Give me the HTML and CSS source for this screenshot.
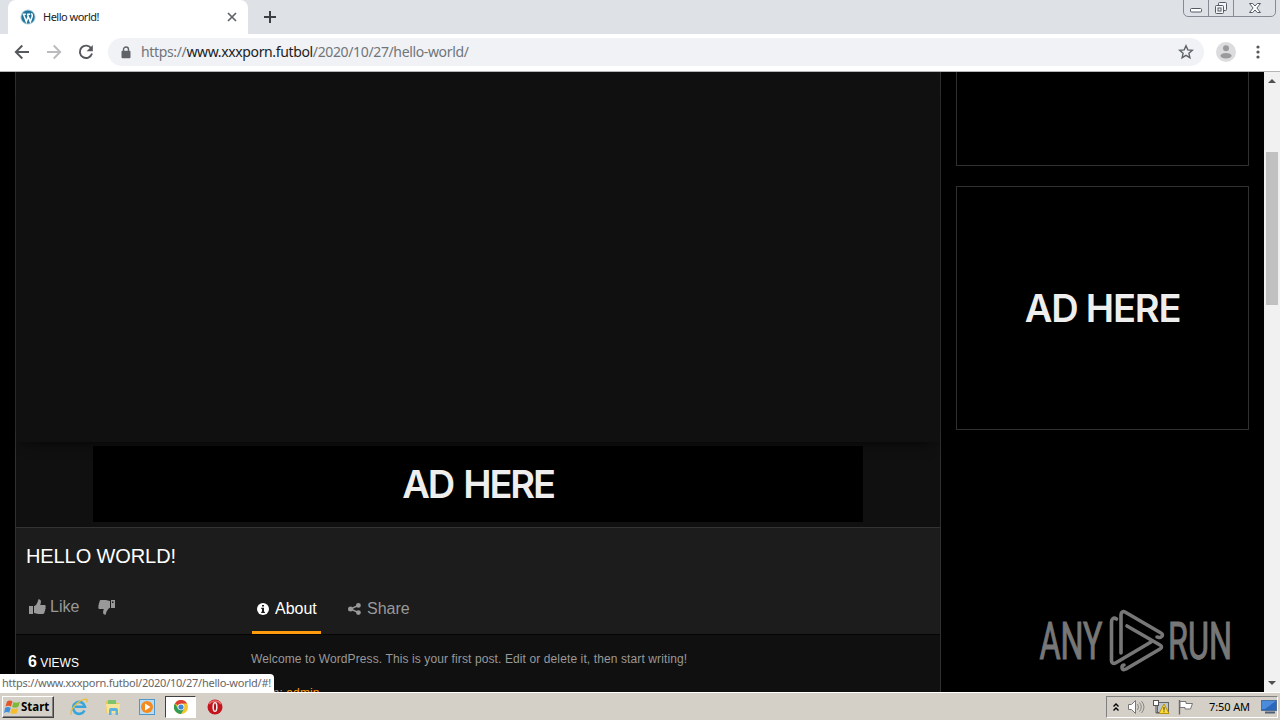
FILE: index.html
```html
<!DOCTYPE html>
<html lang="en">
<head>
    <meta charset="UTF-8">
    <meta name="viewport" content="width=device-width, initial-scale=1.0">
    <title>Hello world!</title>
    <link rel="stylesheet" href="styles.css">
</head>
<body>

    <!-- Browser tabs -->
    <div class="tab-strip">
        <div class="tab">
            <svg class="favicon" width="16" height="16" viewBox="0 0 16 16">
                <circle cx="8" cy="8" r="7.6" fill="#a9cde0"/>
                <circle cx="8" cy="8" r="6.6" fill="#21759b"/>
                <path d="M2.6 5.2h3.2M7 5.2h3.2M3.5 5.2l2.8 7.6 2-5.6M7.4 5.2l2.9 7.6 1.9-5.4c.5-1.500-.6-2-.6-3.200" fill="none" stroke="#fff" stroke-width="1.5"/>
            </svg>
            <span class="tab-title">Hello world!</span>
            <svg class="tab-close" width="10" height="10" viewBox="0 0 10 10"><path d="M1 1l8 8M9 1L1 9" stroke="#5f6368" stroke-width="1.7"/></svg>
        </div>
        <svg class="new-tab" width="12" height="12" viewBox="0 0 12 12"><path d="M6 0v12M0 6h12" stroke="#3c4043" stroke-width="2"/></svg>
        <div class="window-buttons">
            <span class="win-min"><svg width="14" height="16" viewBox="0 0 14 16"><rect x="1.500" y="8.500" width="11" height="3.500" rx="1" fill="#fff" stroke="#555b66"/></svg></span>
            <span class="win-max"><svg width="14" height="16" viewBox="0 0 14 16"><g fill="#f4f5f7" stroke="#555b66"><rect x="4.500" y="2.500" width="8" height="8" rx="1"/><rect x="1.500" y="5.500" width="8" height="8" rx="1"/><rect x="4" y="8" width="3" height="3"/></g></svg></span>
            <span class="win-close"><svg width="14" height="16" viewBox="0 0 14 16"><path d="M1.500 3.500h3.200L7 6l2.300-2.500h3.200L8.900 8l3.600 4.500H9.300L7 10l-2.300 2.500H1.500L5.100 8z" fill="#fff" stroke="#555b66"/></svg></span>
        </div>
    </div>

    <!-- Address bar -->
    <div class="toolbar">
        <svg class="nav-back" width="16" height="16" viewBox="0 0 16 16"><path d="M15 8H2M8.300 1.500L1.800 8l6.500 6.500" fill="none" stroke="#55585c" stroke-width="1.900"/></svg>
        <svg class="nav-forward" width="16" height="16" viewBox="0 0 16 16"><path d="M1 8h13M7.700 1.500L14.200 8l-6.500 6.500" fill="none" stroke="#b9bbbe" stroke-width="1.900"/></svg>
        <svg class="nav-reload" width="16" height="16" viewBox="0 0 16 16"><path d="M13.300 4.500A6.200 6.200 0 1 0 14 9.500" fill="none" stroke="#55585c" stroke-width="1.900"/><path d="M14.800 1v6.200H8.600z" fill="#55585c"/></svg>
        <div class="address">
            <svg class="lock" width="10" height="13" viewBox="0 0 10 13"><path d="M2.500 5.500V3.500a2.500 2.500 0 0 1 5 0v2" fill="none" stroke="#5f6368" stroke-width="1.400"/><rect x="0.500" y="4.700" width="9" height="7.600" rx="1" fill="#5f6368"/></svg>
            <span class="url">https://<b>www.xxxporn.futbol</b>/2020/10/27/hello-world/</span>
            <svg class="star" width="16" height="16" viewBox="0 0 16 16"><path d="M8 1.800l1.800 4.100 4.500.4-3.400 3 1 4.400L8 11.400l-3.900 2.300 1-4.400-3.400-3 4.500-.4z" fill="none" stroke="#5f6368" stroke-width="1.400"/></svg>
        </div>
        <svg class="profile" width="20" height="20" viewBox="0 0 20 20"><circle cx="10" cy="10" r="10" fill="#dcdcde"/><circle cx="10" cy="6.300" r="3" fill="#9a9a9d"/><ellipse cx="10" cy="13.700" rx="5.600" ry="2.800" fill="#9a9a9d"/></svg>
        <svg class="dots" width="4" height="14" viewBox="0 0 4 14"><g fill="#55585c"><circle cx="2" cy="2" r="1.600"/><circle cx="2" cy="7" r="1.600"/><circle cx="2" cy="12" r="1.600"/></g></svg>
    </div>

    <!-- Web page -->
    <div class="viewport">
        <div class="video-column">
            <div class="player"></div>
            <div class="banner-row">
                <div class="banner">AD HERE</div>
            </div>
            <div class="video-info">
                <h1>HELLO WORLD!</h1>
                <div class="actions">
                    <div class="rating">
                        <svg width="17" height="16" viewBox="0 0 17 16" fill="#999"><path d="M0 7h4v8H0zM5 7.300c1.800-.8 3.200-2.800 3.700-4.600L9.400.3c2.600-.3 3.200 2 1.800 5.700h4.200c1.400 0 1.700 1.500.9 2.300.7.700.5 1.900-.3 2.300.4.900.1 1.700-.6 2.100.3 1.300-.3 2.300-1.700 2.300H9.500c-2 0-3-.8-4.500-1z"/></svg>
                        <span>Like</span>
                        <svg class="dislike" width="17" height="16" viewBox="0 0 17 16" fill="#999"><path d="M17 1h-4v8h4zM12 8.700c-1.800.8-3 2.800-3.700 4.600L7.600 15.700c-2.600.3-3.200-2-1.800-5.700H1.600C.2 10-.1 8.500.7 7.700 0 7 .2 5.800 1 5.400c-.4-.9-.1-1.700.6-2.100C1.300 2 1.900 1 3.300 1h4.200c2 0 3 .8 4.500 1z"/><path d="M14 2.500h1.500v1.500H14z" fill="#1c1c1c"/></svg>
                    </div>
                    <div class="info-tab active">
                        <svg width="12" height="12" viewBox="0 0 12 12"><circle cx="6" cy="6" r="6" fill="#fff"/><path d="M5 2h2v1.600H5zM4.200 4.700H7v4h.9V10H4.200V8.700H5V6h-.8z" fill="#1c1c1c"/></svg>
                        <span>About</span>
                    </div>
                    <div class="info-tab">
                        <svg width="13" height="12" viewBox="0 0 13 12"><path d="M10.300 2.400L2.700 6l7.600 3.600" fill="none" stroke="#999" stroke-width="1.600"/><g fill="#999"><circle cx="10.400" cy="2.400" r="2.400"/><circle cx="2.500" cy="6" r="2.500"/><circle cx="10.400" cy="9.600" r="2.400"/></g></svg>
                        <span>Share</span>
                    </div>
                </div>
            </div>
            <div class="details">
                <div class="views"><b>6</b> VIEWS</div>
                <div class="description">
                    <p>Welcome to WordPress. This is your first post. Edit or delete it, then start writing!</p>
                    <p class="author">From: <a>admin</a></p>
                </div>
            </div>
        </div>
        <div class="sidebar">
            <div class="side-ad side-ad-top"></div>
            <div class="side-ad">AD HERE</div>
        </div>
        <div class="scrollbar">
            <svg width="16" height="17" viewBox="0 0 16 17"><path d="M4 11l4-4 4 4z" fill="#505050"/></svg>
            <div class="thumb"></div>
            <svg width="16" height="17" viewBox="0 0 16 17"><path d="M4 6l4 4 4-4z" fill="#505050"/></svg>
        </div>
        <svg class="watermark" width="200" height="66" viewBox="0 0 200 66">
            <g fill="#777" stroke="#777" stroke-width="1.100" font-family="Roboto, sans-serif" font-size="51">
                <text x="4.500" y="51" textLength="63" lengthAdjust="spacingAndGlyphs">ANY</text>
                <text x="133" y="51" textLength="64" lengthAdjust="spacingAndGlyphs">RUN</text>
            </g>
            <g fill="none" stroke="#777" stroke-width="3.600" stroke-linejoin="round" stroke-linecap="round">
                <path d="M81.500 11c-3-2-5 0-5 3v39c0 2 2 3 4 2L116 34"/>
                <path d="M86 45V7c0-3 2-4 4-3l36 21c2 1 2 3 0 4-1 1-3 0-4 0"/>
                <path d="M92 18l33 19c2 1 2 3 0 4L91 61c-2 1-4 1-4-2 0-1 1-2 2-2"/>
            </g>
        </svg>
        <div class="status">https://www.xxxporn.futbol/2020/10/27/hello-world/#!</div>
    </div>

    <!-- Taskbar -->
    <div class="taskbar">
        <div class="start">
            <svg width="17" height="16" viewBox="0 0 17 16"><path d="M3 2.500c2-1.500 4-1 5.500 0L7 7.500c-1.500-1-3.500-1.200-5.500 0z" fill="#e2562a"/><path d="M9.500 3c2 1 4 1 6.500-.5l-1.500 5C12.500 9 10 9 8 8z" fill="#7fb93c"/><path d="M1.200 8.700c2-1.200 4-.9 5.500 0l-1.500 5c-1.500-1-3.500-1-5.200.2z" fill="#3f8fdd"/><path d="M7.600 9.200c2 1 4.400 1 6.600-.3l-1.500 5c-2 1.200-4.600 1.200-6.600.2z" fill="#f4bd2c"/></svg>
            <span>Start</span>
        </div>
        <div class="launch">
            <svg width="18" height="18" viewBox="0 0 18 18"><path d="M14.500 12.500A6 6 0 1 1 15 8.800H5" fill="none" stroke="#36a5dd" stroke-width="2.600"/><path d="M1.500 16.500C-1 12 9 1.500 16 1.200c1.500 0 1.300 1.500.5 3" fill="none" stroke="#e9bd36" stroke-width="1.300"/></svg>
        </div>
        <div class="launch">
            <svg width="18" height="18" viewBox="0 0 18 18"><path d="M2 3h5l1 2h7v10H2z" fill="#e7c75c"/><path d="M4 2h8v4H4z" fill="#7fc46b"/><path d="M2 6h14l-1 9H3z" fill="#f7e49b"/><path d="M5 17v-5q0-2 2-2h5q2 0 2 2v5h-2.500v-4h-4v4z" fill="#5cb2df"/></svg>
        </div>
        <div class="launch">
            <svg width="18" height="18" viewBox="0 0 18 18"><rect x="1.500" y="1.500" width="15" height="15" fill="#b9dcf2" stroke="#5097c9"/><circle cx="9" cy="9" r="6" fill="#f58a1f"/><path d="M7 5.500v7L12.500 9z" fill="#fff"/></svg>
        </div>
        <div class="launch running">
            <svg width="14" height="14" viewBox="0 0 14 14"><circle cx="7" cy="7" r="7" fill="#f3c62f"/><path d="M7 7L.9 3.500A7 7 0 0 1 13.100 3.500H7z" fill="#dc4034"/><path d="M.9 3.500A7 7 0 0 0 7 14l3-5.300L4 8.700z" fill="#2e9c55"/><circle cx="7" cy="7" r="3.300" fill="#fff"/><circle cx="7" cy="7" r="2.600" fill="#4285d9"/></svg>
        </div>
        <div class="launch">
            <svg width="16" height="16" viewBox="0 0 16 16"><circle cx="8" cy="8" r="7.500" fill="#c3161c"/><path d="M2 5a7 6 0 0 1 12 0" fill="none" stroke="#e8696a" stroke-width="1.500"/><ellipse cx="8" cy="8" rx="2.600" ry="5" fill="#f3eaea"/><ellipse cx="8" cy="8" rx="1" ry="3.800" fill="#a50d13"/></svg>
        </div>
        <div class="tray">
            <svg width="8" height="10" viewBox="0 0 8 10"><path d="M1.500 4.500L4 2l2.500 2.500M1.500 8.500L4 6l2.500 2.500" fill="none" stroke="#000" stroke-width="1.400"/></svg>
            <svg width="18" height="16" viewBox="0 0 18 16"><path d="M1.500 5.500h3l4-4v13l-4-4h-3z" fill="#fff" stroke="#777"/><path d="M10.500 5q2 3 0 6M12.500 3.500q3.500 4.500 0 9M14.500 2q5 6 0 12" fill="none" stroke="#888"/></svg>
            <svg width="18" height="16" viewBox="0 0 18 16"><rect x="5.500" y="3.500" width="11" height="10" fill="#bfc5cc" stroke="#666"/><rect x="1.500" y="1.500" width="5" height="5" fill="#fff" stroke="#555"/><path d="M4 7v7h4" fill="none" stroke="#555"/><path d="M12 5l5 9.500H7z" fill="#ffdc35" stroke="#b49113"/><path d="M12 8v3.500M12 12.300v1" stroke="#333"/></svg>
            <svg width="17" height="16" viewBox="0 0 17 16"><path d="M2.500 1v14.500" stroke="#666" stroke-width="1.400"/><path d="M3 2.500h6v2h6.500L13.500 10H8V8.500H3z" fill="#fff" stroke="#777"/></svg>
            <span class="clock">7:50 AM</span>
            <svg class="desktop" width="16" height="14" viewBox="0 0 16 14"><rect x=".5" y=".5" width="15" height="10" fill="#2b66b8" stroke="#4b6f9e"/><path d="M1 1h14L4 9H1z" fill="#4b8bdc"/><path d="M4 11.500h10v2H4z" fill="#505f74"/></svg>
        </div>
    </div>

</body>
</html>
```
FILE: styles.css
```css
* {
    box-sizing: border-box;
}

body {
    margin: 0;
    width: 1280px;
    height: 720px;
    overflow: hidden;
    display: flex;
    flex-direction: column;
    font-family: "Liberation Sans", Arial, sans-serif;
    background: #000;
}

svg {
    display: block;
    flex-shrink: 0;
}

/* Tabs */
.tab-strip {
    height: 34px;
    flex-shrink: 0;
    display: flex;
    align-items: flex-start;
    background: #dee1e6;
}

.tab {
    width: 240px;
    height: 34px;
    margin-left: 8px;
    padding: 0 11px 0 12px;
    display: flex;
    align-items: center;
    background: #fff;
    border-radius: 8px 8px 0 0;
}

.tab-title {
    margin-left: 7px;
    padding-bottom: 1px;
    flex: 1;
    font-family: "Noto Sans", sans-serif;
    font-size: 11px;
    letter-spacing: -0.5px;
    color: #222;
}

.new-tab {
    margin: 11px 0 0 16px;
}

.window-buttons {
    margin: -1px 4px 0 auto;
    height: 18px;
    display: flex;
    border: 1px solid #858a93;
    border-radius: 0 0 5px 5px;
}

.window-buttons span {
    width: 25px;
    display: flex;
    justify-content: center;
    border-right: 1px solid #858a93;
}

.window-buttons .win-close {
    width: 41px;
    border-right: none;
}

/* Toolbar */
.toolbar {
    height: 38px;
    flex-shrink: 0;
    display: flex;
    align-items: center;
    padding: 0 20px 1px 14px;
    background: #fff;
    border-bottom: 1px solid #b5b5b5;
}

.nav-forward, .nav-reload {
    margin-left: 16px;
}

.address {
    width: 1096px;
    height: 28px;
    margin-left: 14px;
    padding: 0 10px 0 13px;
    display: flex;
    align-items: center;
    background: #f0f2f5;
    border-radius: 14px;
}

.url {
    flex: 1;
    margin-left: 10px;
    padding-bottom: 2px;
    font-family: "Noto Sans", sans-serif;
    font-size: 14px;
    letter-spacing: -0.36px;
    color: #70757a;
}

.url b {
    font-weight: normal;
    color: #202124;
}

.profile {
    margin-left: 12px;
}

.dots {
    margin-left: 20px;
}

/* Page */
.viewport {
    position: relative;
    height: 620px;
    flex-shrink: 0;
    display: flex;
    overflow: hidden;
    background: #000;
}

.video-column {
    width: 926px;
    margin-left: 15px;
    display: flex;
    flex-direction: column;
    border: solid #303030;
    border-width: 0 1px;
    background: #101010;
}

.player {
    height: 370px;
    flex-shrink: 0;
    background: #101010;
    box-shadow: 0 6px 14px -8px #000;
}

.banner-row {
    height: 85px;
    flex-shrink: 0;
    padding: 4px 77px 5px;
}

.banner {
    height: 76px;
    background: #000;
    color: #eee;
    font-family: Inter, sans-serif;
    font-size: 38px;
    font-weight: 600;
    letter-spacing: -2.2px;
    word-spacing: 3px;
    line-height: 76px;
    text-align: center;
}

.video-info {
    height: 108px;
    flex-shrink: 0;
    border-top: 1px solid #333;
    border-bottom: 1px solid #050505;
    background: #1c1c1c;
}

h1 {
    margin: 0;
    padding: 16px 0 0 10px;
    font-size: 20px;
    font-weight: normal;
    letter-spacing: -0.1px;
    line-height: 24px;
    color: #fff;
}

.actions {
    height: 66px;
    padding-left: 13px;
    display: flex;
    align-items: flex-end;
    font-size: 16px;
    color: #999;
}

.rating {
    width: 223px;
    height: 56px;
    padding-top: 1px;
    display: flex;
    align-items: center;
    gap: 4px;
}

.rating .dislike {
    margin-left: 15px;
}

.info-tab {
    width: 69px;
    height: 50px;
    margin-right: 22px;
    padding: 3px 0 0 5px;
    display: flex;
    align-items: center;
    gap: 6px;
    border-bottom: 3px solid transparent;
}

.active {
    color: #fff;
    border-color: #ff9c0d;
}

.details {
    display: flex;
    padding: 16px 0 0 12px;
    font-size: 12px;
    color: #999;
}

.views {
    width: 223px;
    padding-top: 1px;
    line-height: 20px;
    color: #fff;
}

.views b {
    font-size: 16px;
}

.description p {
    margin: 0;
    height: 34px;
    line-height: 17px;
    letter-spacing: 0.11px;
}

.description a {
    color: #ff9c0d;
}

/* Sidebar ads */
.sidebar {
    width: 323px;
    padding-left: 15px;
}

.side-ad {
    width: 293px;
    height: 244px;
    margin-bottom: 20px;
    border: 1px solid #303030;
    color: #eee;
    font-family: Inter, sans-serif;
    font-size: 38px;
    font-weight: 600;
    letter-spacing: -1.2px;
    line-height: 243px;
    text-align: center;
}

.side-ad-top {
    height: 94px;
    border-top: none;
}

.scrollbar {
    width: 16px;
    display: flex;
    flex-direction: column;
    background: #f1f1f1;
}

.thumb {
    height: 153px;
    margin: 63px 2px auto;
    background: #c1c1c1;
}

.watermark {
    position: absolute;
    left: 1035px;
    top: 536px;
}

.status {
    position: absolute;
    left: 0;
    bottom: 0;
    width: 274px;
    height: 18px;
    padding-left: 2px;
    border-radius: 0 4px 0 0;
    background: #fff;
    font-family: "Noto Sans", sans-serif;
    font-size: 11px;
    letter-spacing: -0.24px;
    line-height: 18px;
    white-space: nowrap;
    color: #666;
}

/* Taskbar */
.taskbar {
    height: 28px;
    flex-shrink: 0;
    display: flex;
    align-items: center;
    padding: 1px 2px;
    border-top: 1px solid #fff;
    background: #d4d0c8;
}

.start {
    width: 52px;
    height: 22px;
    margin-right: 9px;
    padding-left: 1px;
    display: flex;
    align-items: center;
    border: 1px solid;
    border-color: #fff #404040 #404040 #fff;
    box-shadow: inset -1px -1px #808080;
    font-family: "Noto Sans", sans-serif;
    font-size: 11.5px;
    font-weight: bold;
}

.launch {
    width: 31px;
    height: 22px;
    margin-right: 3px;
    display: flex;
    align-items: center;
    justify-content: center;
}

.running {
    border: 1px solid;
    border-color: #404040 #fff #fff #404040;
    background: #fff;
}

.tray {
    height: 22px;
    width: 172px;
    margin-left: auto;
    padding-left: 5px;
    display: flex;
    align-items: center;
    border: 1px solid;
    border-color: #808080 #fff #fff #808080;
}

.tray svg + svg {
    margin-left: 7px;
}

.clock {
    margin-left: 15px;
    font-family: "Noto Sans", sans-serif;
    font-size: 11px;
    letter-spacing: -0.1px;
    white-space: nowrap;
}

.tray .desktop {
    margin-left: auto;
}
```
